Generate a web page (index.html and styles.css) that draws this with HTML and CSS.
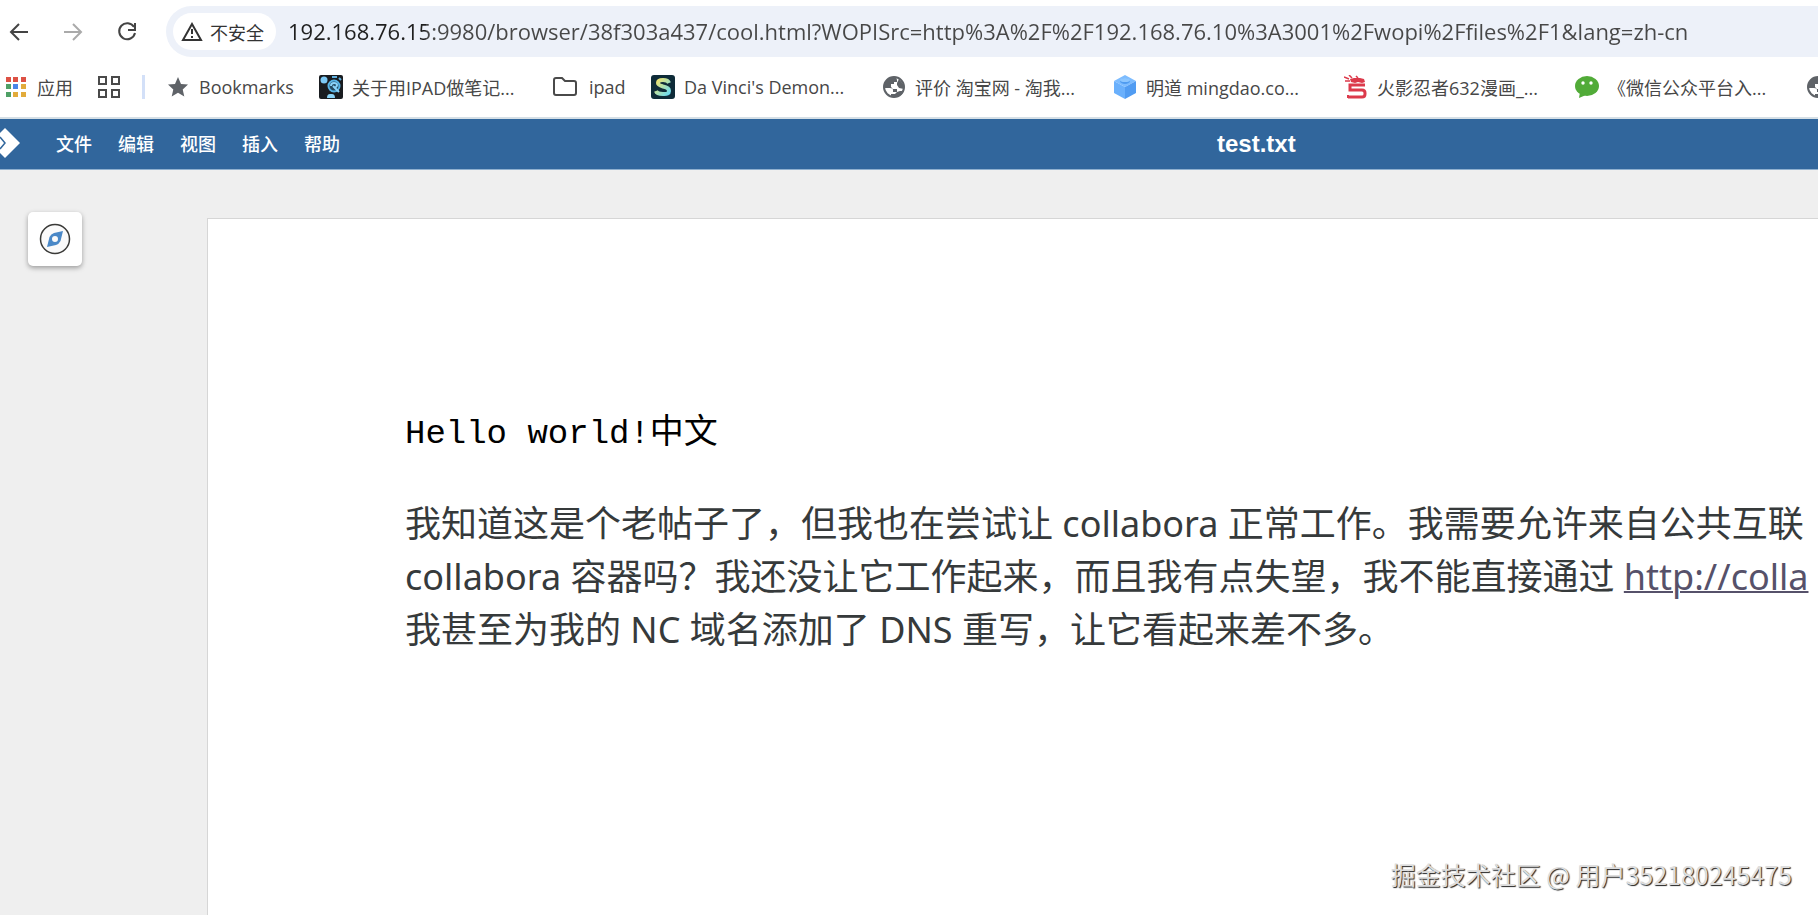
FILE: index.html
```html
<!DOCTYPE html>
<html lang="zh-CN">
<head>
<meta charset="UTF-8">
<meta name="viewport" content="width=device-width, initial-scale=1.0">
<title>test.txt</title>
<link rel="stylesheet" href="styles.css">
</head>
<body>
    <svg class="defs" aria-hidden="true">
        <symbol id="globe" viewBox="0 0 24 24">
            <circle cx="12" cy="12" r="10" fill="none" stroke="#5f6368" stroke-width="2"/>
            <path fill="#5f6368" d="M14 2C7 1 2 6 2 13h6q3 0 3 2v2h4v-3h-4l-2-2V9h3V7h3V5z"/>
            <path fill="#5f6368" d="M17 4l5 6v4l-5-1-2-3V8zM9 22v-3h4l2-2 3-1h4q-3 7-13 6z"/>
        </symbol>
    </svg>

    <header class="browser">
        <div class="toolbar">
            <button class="nav" aria-label="后退">
                <svg width="24" height="24" viewBox="0 0 24 24"><path d="M21 12H4M12 4l-8 8 8 8"/></svg>
            </button>
            <button class="nav disabled" aria-label="前进">
                <svg width="24" height="24" viewBox="0 0 24 24"><path d="M3 12h17M12 4l8 8-8 8"/></svg>
            </button>
            <button class="nav" aria-label="刷新">
                <svg width="24" height="24" viewBox="0 0 24 24"><path d="M19 7a8 8 0 1 0 1 6M20 3v7h-7"/></svg>
            </button>
            <div class="address">
                <button class="security">
                    <svg width="22" height="20" viewBox="0 0 22 20"><path d="M11 2L20 18H2z" fill="none" stroke="#333" stroke-width="2"/><path d="M11 7v5M11 14v2" stroke="#333" stroke-width="2"/></svg>
                    不安全
                </button>
                <input class="url" type="text" aria-label="地址" value="192.168.76.15:9980/browser/38f303a437/cool.html?WOPISrc=http%3A%2F%2F192.168.76.10%3A3001%2Fwopi%2Ffiles%2F1&amp;lang=zh-cn">
            </div>
        </div>

        <nav class="bookmarks">
            <a class="apps" href="#">
                <svg width="20" height="20" viewBox="0 0 20 20">
                    <path fill="#dd5144" d="M0 0h5v5H0zM7 0h5v5H7zM15 0h5v5h-5z"/>
                    <path fill="#4fa066" d="M0 7h5v5H0zM0 15h5v5H0z"/>
                    <path fill="#4a86e8" d="M7 7h5v5H7z"/>
                    <path fill="#e2ab3b" d="M15 7h5v5h-5zM7 15h5v5H7zM15 15h5v5h-5z"/>
                </svg>
                应用
            </a>
            <button class="groups" aria-label="标签页组">
                <svg width="22" height="22" viewBox="0 0 22 22"><path d="M1 1h7v7H1zM14 1h7v7h-7zM1 14h7v7H1zM14 14h7v7h-7z" fill="none" stroke="#4a4a4a" stroke-width="2"/></svg>
            </button>
            <span class="divider"></span>
            <a class="bookmark star" href="#">
                <svg width="24" height="24" viewBox="0 0 24 24"><path fill="#5f6368" d="M12 2l3 7 7 .6-5.300 4.800 1.600 7.200L12 17.800l-6.300 3.800 1.600-7.200L2 9.600 9 9z"/></svg>
                <span>Bookmarks</span>
            </a>
            <a class="bookmark" href="#">
                <svg width="24" height="24" viewBox="0 0 24 24"><rect width="24" height="24" rx="2" fill="#191c20"/><circle cx="5" cy="5" r="3.500" fill="#7cc9f5"/><path d="M13 2h5M20 3l2 2" stroke="#5fb0e0" stroke-width="2"/><circle cx="15" cy="11" r="5.500" fill="#24495f" stroke="#58b4e6" stroke-width="2"/><path d="M12 11q0-3 3-3t3 2-3 3M14 11l6 6" stroke="#8bd4fa" stroke-width="2" fill="none"/><path d="M8 23q0-4 3-4h2q3 0 3 4z" fill="#8ad3f7"/></svg>
                <span>关于用IPAD做笔记...</span>
            </a>
            <a class="bookmark folder" href="#">
                <svg width="28" height="24" viewBox="0 0 28 24"><path d="M4 5q0-2 2-2h6l3 3h9q2 0 2 2v10q0 2-2 2H6q-2 0-2-2z" fill="none" stroke="#4a4a4a" stroke-width="2"/></svg>
                <span>ipad</span>
            </a>
            <a class="bookmark" href="#">
                <svg width="24" height="24" viewBox="0 0 24 24"><defs><linearGradient id="glow" x1="0" y1="0" x2="1" y2="1"><stop offset="0" stop-color="#f3e36b"/><stop offset="1" stop-color="#6bdcf0"/></linearGradient></defs><rect width="24" height="24" rx="3" fill="#0e2b38"/><path d="M18 8q-1-3-6-3-5 0-5 3 0 2 5 3.500 6 1 6 4.500t-6 3q-6 0-7-3" fill="none" stroke="url(#glow)" stroke-width="4"/></svg>
                <span>Da Vinci's Demon...</span>
            </a>
            <a class="bookmark" href="#">
                <svg width="24" height="24"><use href="#globe"/></svg>
                <span>评价 淘宝网 - 淘我...</span>
            </a>
            <a class="bookmark" href="#">
                <svg width="24" height="24" viewBox="0 0 24 24"><path fill="#7dbcff" d="M12 0l11 6-11 6L1 6z"/><path fill="#6ab0fc" d="M1 6l11 6v12L1 18z"/><path fill="#519cf2" d="M23 6l-11 6v12l11-6z"/><ellipse cx="12" cy="6" rx="5" ry="3" fill="#4f9bf0"/><ellipse cx="12" cy="5" rx="5" ry="2" fill="#8cc6ff"/></svg>
                <span>明道 mingdao.co...</span>
            </a>
            <a class="bookmark" href="#">
                <svg width="24" height="24" viewBox="0 0 24 24"><path d="M21 10H6v5h12q3 0 3 3v1q0 3-3 3H4" fill="none" stroke="#dc3a4b" stroke-width="3"/><path d="M4 23v-3" stroke="#dc3a4b" stroke-width="2"/><path d="M0 2l5 2M5 0l3 3M1 6h5M12 1l2 2" stroke="#dc3a4b" stroke-width="1.500"/><path fill="#dc3a4b" d="M6 4l4-1h6l4 1 1 3-3 1-4-1-3 1-4-1z"/></svg>
                <span>火影忍者632漫画_...</span>
            </a>
            <a class="bookmark" href="#">
                <svg width="24" height="24" viewBox="0 0 24 24"><ellipse cx="12" cy="11" rx="12" ry="10" fill="#51ab38"/><path fill="#51ab38" d="M5 17l-1 6 7-3z"/><circle cx="8" cy="8" r="1.700" fill="#fff"/><circle cx="16" cy="8" r="1.700" fill="#fff"/></svg>
                <span>《微信公众平台入...</span>
            </a>
            <a class="bookmark" href="#" aria-label="书签">
                <svg width="24" height="24"><use href="#globe"/></svg>
            </a>
        </nav>
    </header>

    <div class="menubar">
        <svg class="logo" width="20" height="30" viewBox="0 0 20 30"><path fill="#fff" d="M5 0l15 15L5 30l-5-5V5z"/><path d="M0 9l5 6-5 6" fill="none" stroke="#31669c" stroke-width="1.500"/></svg>
        <nav class="menus">
            <button>文件</button>
            <button>编辑</button>
            <button>视图</button>
            <button>插入</button>
            <button>帮助</button>
        </nav>
        <h1 class="filename">test.txt</h1>
    </div>

    <main class="workspace">
        <button class="navigator" aria-label="导航">
            <svg width="32" height="32" viewBox="0 0 32 32"><circle cx="16" cy="16" r="14.500" fill="#fafafa" stroke="#3a3a38" stroke-width="1.500"/><path fill="#4a88c7" fill-rule="evenodd" d="M24 8L21.500 18Q20 21 17 22L8 24L10.500 14Q12 11 15 10zM16 13a3 3 0 1 0 0 6 3 3 0 0 0 0-6z"/></svg>
        </button>
        <article class="page">
            <p class="hello">Hello world!中文</p>
            <p class="line">我知道这是个老帖子了，但我也在尝试让 collabora 正常工作。我需要允许来自公共互联</p>
            <p class="line">collabora 容器吗？我还没让它工作起来，而且我有点失望，我不能直接通过 <a href="#">http://colla</a></p>
            <p class="line">我甚至为我的 NC 域名添加了 DNS 重写，让它看起来差不多。</p>
        </article>
    </main>

    <div class="watermark">掘金技术社区 @ 用户352180245475</div>
</body>
</html>
```
FILE: styles.css
```css
/* Global styles */
* {
    box-sizing: border-box;
}
body {
    margin: 0;
    height: 100vh;
    display: flex;
    flex-direction: column;
    overflow: hidden;
    font-family: "Noto Sans", "Noto Sans CJK SC", sans-serif;
    background-color: #efefef;
}
button {
    border: none;
    padding: 0;
    background: none;
    font-family: inherit;
    cursor: pointer;
}
svg {
    flex: none;
}
.defs {
    position: absolute;
    width: 0;
    height: 0;
}

/* Browser toolbar */
.browser {
    background-color: #fff;
    border-bottom: 2px solid #d5dfe6;
    font-family: "Open Sans", "Noto Sans CJK SC", sans-serif;
}
.toolbar {
    display: flex;
    align-items: center;
    padding-top: 6px;
    padding-left: 7px;
}
.nav {
    width: 24px;
    height: 24px;
    margin-right: 30px;
}
.nav:nth-child(3) {
    margin-right: 27px;
}
.nav svg {
    display: block;
    fill: none;
    stroke: #444;
    stroke-width: 2;
}
.nav.disabled svg {
    stroke: #aaa;
}
.address {
    flex: 1;
    display: flex;
    align-items: center;
    height: 51px;
    padding-left: 7px;
    border-radius: 26px 0 0 26px;
    background-color: #edf1f9;
}
.security {
    display: flex;
    align-items: center;
    gap: 7px;
    height: 37px;
    padding: 0 12px 0 8px;
    border-radius: 19px;
    background-color: #fff;
    color: #333;
    font-size: 18px;
}
.url {
    flex: 1;
    min-width: 0;
    margin-left: 12px;
    padding: 0 0 2px;
    border: none;
    outline: none;
    /* host is darker than the rest of the address */
    background: linear-gradient(to right, #1f1f1f 138px, #474747 138px);
    -webkit-background-clip: text;
    background-clip: text;
    color: transparent;
    font-family: inherit;
    font-size: 22px;
    line-height: 32px;
}

/* Bookmarks */
.bookmarks {
    display: flex;
    align-items: center;
    height: 60px;
    padding-left: 6px;
    overflow: hidden;
    font-size: 18px;
    white-space: nowrap;
}
.bookmarks a {
    color: #474747;
    text-decoration: none;
}
.apps {
    flex: none;
    display: flex;
    align-items: center;
    gap: 11px;
    width: 92px;
}
.groups {
    flex: none;
}
.groups svg {
    display: block;
}
.divider {
    flex: none;
    width: 3px;
    height: 24px;
    margin: 0 21px 0 22px;
    background-color: #d3e0f8;
}
.bookmark {
    flex: none;
    display: flex;
    align-items: center;
    gap: 9px;
    width: 231px;
}
.bookmark.star {
    width: 153px;
}
.bookmark.folder {
    width: 101px;
    gap: 11px;
}

/* Menu bar */
.menubar {
    display: flex;
    align-items: center;
    height: 51px;
    padding-bottom: 2px;
    border-bottom: 1px solid #8fb0cf;
    background-color: #31669c;
    color: #fff;
}
.menus {
    display: flex;
    gap: 26px;
    margin-left: 36px;
}
.menus button {
    color: #fff;
    font-size: 18px;
    font-weight: 500;
}
.filename {
    flex: 1;
    margin: 0;
    padding: 2px 0 0 877px;
    font-family: "Liberation Sans", sans-serif;
    font-size: 24px;
}

/* Document */
.workspace {
    flex: 1;
    display: flex;
    align-items: flex-start;
    min-height: 0;
    padding: 42px 0 0 28px;
}
.navigator {
    flex: none;
    display: flex;
    align-items: center;
    justify-content: center;
    width: 54px;
    height: 54px;
    border-radius: 5px;
    background-color: #fff;
    box-shadow: 0 2px 5px rgba(0, 0, 0, 0.35);
}
.page {
    flex: 1;
    align-self: stretch;
    min-width: 0;
    margin: 6px 0 0 125px;
    padding: 189px 0 0 197px;
    overflow: hidden;
    border: 1px solid #d6d6d6;
    border-width: 1px 0 0 1px;
    background-color: #fff;
    white-space: nowrap;
}
.page p {
    margin: 0;
}
.page .hello {
    margin-bottom: 36px;
    color: #000;
    font-family: "Liberation Mono", "Noto Sans CJK SC", monospace;
    font-size: 34px;
    line-height: 53px;
}
.line {
    color: #363a3b;
    font-size: 36px;
    line-height: 53px;
}
.line a {
    color: #56516a;
    text-decoration-thickness: 2px;
}

.watermark {
    position: absolute;
    right: 26px;
    bottom: 23px;
    color: #ddd;
    font-family: "Noto Sans CJK SC", sans-serif;
    font-size: 25px;
    text-shadow: 1px 1px 1px #222;
}
```
